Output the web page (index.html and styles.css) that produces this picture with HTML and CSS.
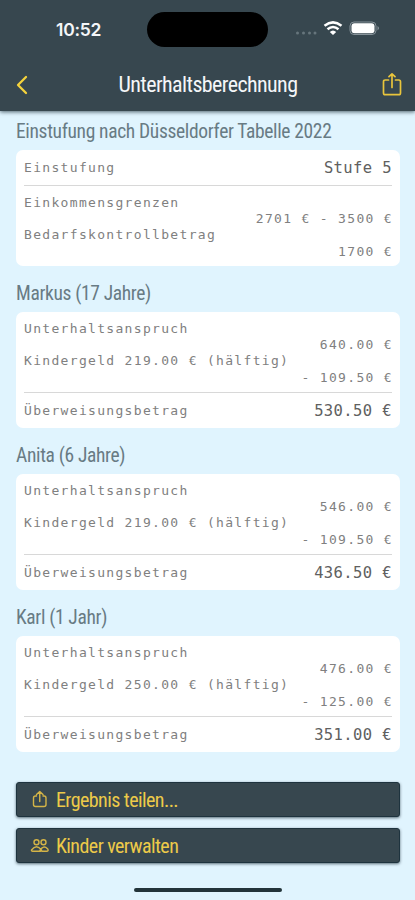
FILE: index.html
```html
<!DOCTYPE html>
<html lang="de">
<head>
<meta charset="utf-8">
<title>Unterhaltsberechnung</title>
<link rel="stylesheet" href="styles.css">
</head>
<body>
<header class="header">
  <div class="status">
    <span class="time">10:52</span>
    <span class="island"></span>
    <svg class="indicators" width="90" height="20" viewBox="0 0 90 20">
      <g fill="#66757c"><circle cx="2.500" cy="14" r="1.500"/><circle cx="8.500" cy="14" r="1.500"/><circle cx="14.500" cy="14" r="1.500"/><circle cx="20" cy="14" r="1.500"/></g>
      <g fill="none" stroke="#fff" stroke-width="2.500"><path d="M29.500 6.800Q38 0 46.500 6.800"/><path d="M32.500 10.300Q38 5.600 43.500 10.300"/></g>
      <path d="M34.800 13Q38 10 41.200 13L38 16Z" fill="#fff"/>
      <rect x="55" y="3" width="26" height="12.500" rx="4" fill="none" stroke="#87939a"/>
      <rect x="56.500" y="4.300" width="23" height="10" rx="3" fill="#fff"/>
      <path d="M82.500 7Q85.500 9.200 82.500 11.400Z" fill="#87939a"/>
    </svg>
  </div>
  <nav class="nav">
    <svg class="back" width="14" height="22" viewBox="0 0 14 22"><path d="M11 3L3 11L11 19" fill="none" stroke="#f5d33c" stroke-width="2.300" stroke-linecap="round" stroke-linejoin="round"/></svg>
    <h1 class="title"><span class="cond">Unterhaltsberechnung</span></h1>
    <svg class="share" width="20" height="24" viewBox="0 0 20 24"><path d="M6.500 7H3.200Q1.500 7 1.500 8.700V20Q1.500 21.700 3.200 21.700H16.800Q18.500 21.700 18.500 20V8.700Q18.500 7 16.800 7H13.500M10 14.500V1M7 3.700L10 .9L13 3.700" fill="none" stroke="#e9c53c" stroke-width="1.700" stroke-linecap="round" stroke-linejoin="round"/></svg>
  </nav>
</header>
<main class="content">
  <h2 class="heading"><span class="cond">Einstufung nach Düsseldorfer Tabelle 2022</span></h2>
  <section class="card">
    <div class="sum"><span>Einstufung</span><span class="big">Stufe 5</span></div>
    <hr>
    <div class="rows"><span>Einkommensgrenzen</span><span class="val">2701 € - 3500 €</span><span>Bedarfskontrollbetrag</span><span class="val">1700 €</span></div>
  </section>
  <h2 class="heading"><span class="cond">Markus (17 Jahre)</span></h2>
  <section class="card">
    <div class="rows"><span>Unterhaltsanspruch</span><span class="val">640.00 €</span><span>Kindergeld 219.00 € (hälftig)</span><span class="val">- 109.50 €</span></div>
    <hr>
    <div class="sum"><span>Überweisungsbetrag</span><span class="big">530.50 €</span></div>
  </section>
  <h2 class="heading"><span class="cond">Anita (6 Jahre)</span></h2>
  <section class="card">
    <div class="rows"><span>Unterhaltsanspruch</span><span class="val">546.00 €</span><span>Kindergeld 219.00 € (hälftig)</span><span class="val">- 109.50 €</span></div>
    <hr>
    <div class="sum"><span>Überweisungsbetrag</span><span class="big">436.50 €</span></div>
  </section>
  <h2 class="heading"><span class="cond">Karl (1 Jahr)</span></h2>
  <section class="card">
    <div class="rows"><span>Unterhaltsanspruch</span><span class="val">476.00 €</span><span>Kindergeld 250.00 € (hälftig)</span><span class="val">- 125.00 €</span></div>
    <hr>
    <div class="sum"><span>Überweisungsbetrag</span><span class="big">351.00 €</span></div>
  </section>
  <div class="actions">
    <button class="button"><svg width="20" height="20" viewBox="0 0 20 20"><path d="M6.500 6H5.500Q3.500 6 3.500 8V14.500Q3.500 16.500 5.500 16.500H14Q16 16.500 16 14.500V8Q16 6 14 6H13M9.750 11.500V2M6.500 4.500L9.750 1.500L13 4.500"/></svg><span class="cond">Ergebnis teilen...</span></button>
    <button class="button"><svg width="20" height="20" viewBox="0 0 20 20"><circle cx="6.500" cy="6.300" r="2.500"/><circle cx="13.500" cy="6.300" r="2.500"/><path d="M10 14.300Q13.500 8.700 17.500 12.700Q19 15 17 15.200H12M1.500 14Q6.500 7.500 11.500 14Q11.700 15.200 10.500 15.200H2.500Q1.300 15.200 1.500 14Z"/></svg><span class="cond">Kinder verwalten</span></button>
  </div>
</main>
<div class="home"></div>
</body>
</html>
```
FILE: styles.css
```css
* { box-sizing: border-box; }
body { margin: 0; height: 900px; overflow: hidden; display: flex; flex-direction: column; background: #e0f4fe; font-family: Roboto, sans-serif; }
.header { height: 110.500px; flex: none; background: #37474f; box-shadow: 0 1px 4px rgba(0, 20, 30, .65); color: #f4f6f8; }
.status { height: 58px; display: grid; grid-template-columns: 147px 121px 1fr; align-items: center; }
.time { padding: 1px 0 0 56px; font: 600 17.500px/22px Inter, sans-serif; letter-spacing: -.25px; }
.island { height: 35px; border-radius: 18px; background: #000; }
.indicators { margin-left: 27px; }
.nav { height: 52px; display: flex; align-items: center; justify-content: space-between; padding: 1px 13px 0 15px; }
.title { margin: 0 0 0 5px; width: 180px; display: flex; justify-content: center; font-size: 22px; font-weight: 400; line-height: 26px; letter-spacing: -.6px; }
.cond { display: inline-block; flex: none; white-space: nowrap; font-stretch: 75%; }
.content { padding: 7.500px 15px 0 16px; }
.heading { margin: 0; height: 27px; font-size: 19.500px; font-weight: 380; line-height: 28px; letter-spacing: -.34px; color: #687b84; }
.card { height: 116px; margin: 5px 0 14px; padding: 0 8px; background: #fff; border-radius: 7px; font: 13px/16.400px "DejaVu Sans Mono", monospace; letter-spacing: 1.32px; color: #808080; display: flex; flex-direction: column; }
.rows { flex: 1; display: flex; flex-direction: column; padding-top: 8.500px; white-space: pre; }
.val { align-self: flex-end; margin-right: -1px; }
.sum { height: 35px; display: flex; align-items: center; justify-content: space-between; padding-top: 2px; white-space: pre; }
.big { font-size: 15.500px; letter-spacing: .4px; color: #606060; }
hr { width: 100%; height: 1px; border: 0; margin: 0; background: #d8d8d8; }
.actions { margin-top: 30px; display: flex; flex-direction: column; gap: 11px; }
.button { height: 35px; width: 100%; display: flex; align-items: center; gap: 6px; padding: 0 13px; border: 1px solid #1e333e; border-radius: 3px; background: #37474f; box-shadow: 0 1px 3px rgba(0, 20, 30, .6); color: #edca49; font: 450 20px/24px Roboto, sans-serif; letter-spacing: -.57px; }
.button svg { fill: none; stroke: #d4b447; stroke-width: 1.400; stroke-linecap: round; stroke-linejoin: round; }
.home { width: 148px; height: 4px; margin: auto auto 8px 134px; border-radius: 2px; background: #22343a; flex: none; }
```
